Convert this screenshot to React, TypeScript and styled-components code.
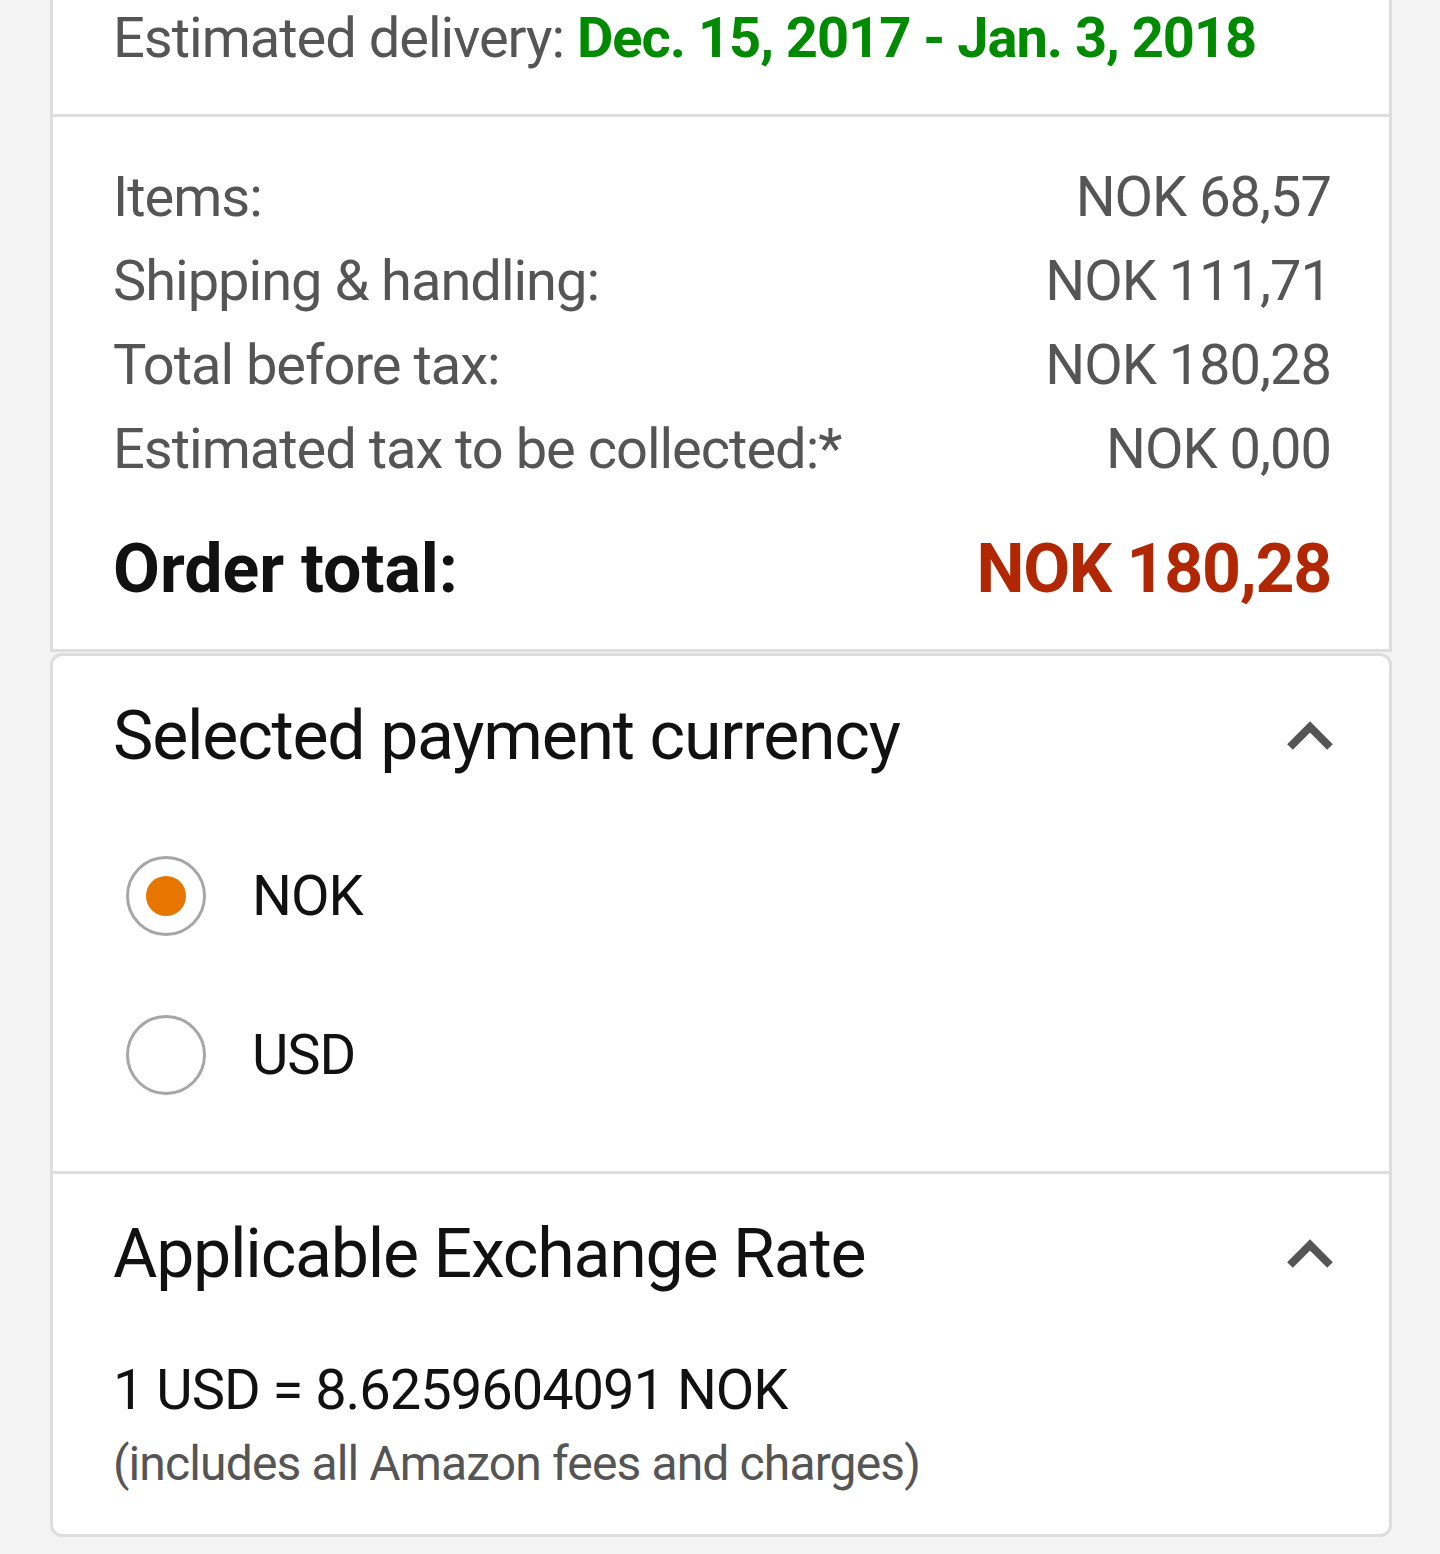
import React from "react";
import styled, { createGlobalStyle, css } from "styled-components";

const GlobalStyle = createGlobalStyle`
  html, body {
    margin: 0;
    padding: 0;
    background: #f3f3f3;
    font-family: Roboto, "Liberation Sans", sans-serif;
    color: #111;
  }
`;

// Roboto runs a little wider than the original font, so pull it in
const tight = css`
  letter-spacing: -0.018em;
`;

const summaryRows = [
  { label: "Items:", value: "NOK 68,57" },
  { label: "Shipping & handling:", value: "NOK 111,71" },
  { label: "Total before tax:", value: "NOK 180,28" },
  { label: "Estimated tax to be collected:*", value: "NOK 0,00" },
];

const currencies = ["NOK", "USD"];

function ChevronUp() {
  return (
    <svg width="50" height="34" viewBox="0 0 50 34">
      <path d="M5 28 L25 8 L45 28" fill="none" stroke="#555" strokeWidth="8" />
    </svg>
  );
}

function App() {
  const [currency, setCurrency] = React.useState("NOK");

  return (
    <Page>
      <GlobalStyle />
      <OrderCard>
        <DeliverySection>
          <DeliveryLine>
            Estimated delivery: <Green>Dec. 15, 2017 - Jan. 3, 2018</Green>
          </DeliveryLine>
        </DeliverySection>
        <SummarySection>
          {summaryRows.map((row) => (
            <Row key={row.label}>
              <span>{row.label}</span>
              <span>{row.value}</span>
            </Row>
          ))}
          <TotalRow>
            <span>Order total:</span>
            <TotalPrice>NOK 180,28</TotalPrice>
          </TotalRow>
        </SummarySection>
      </OrderCard>

      <PaymentCard>
        <CurrencySection>
          <SectionHeader>
            <Title>Selected payment currency</Title>
            <ChevronUp />
          </SectionHeader>
          <RadioList>
            {currencies.map((c) => (
              <RadioRow key={c} onClick={() => setCurrency(c)}>
                <Radio $checked={currency === c} />
                <RadioLabel>{c}</RadioLabel>
              </RadioRow>
            ))}
          </RadioList>
        </CurrencySection>
        <RateSection>
          <SectionHeader>
            <Title>Applicable Exchange Rate</Title>
            <ChevronUp />
          </SectionHeader>
          <Rate>1 USD = 8.6259604091 NOK</Rate>
          <Note>(includes all Amazon fees and charges)</Note>
        </RateSection>
      </PaymentCard>
    </Page>
  );
}

const Page = styled("div")`
  display: flex;
  flex-direction: column;
  padding: 0 48px 20px 50px;
`;

const OrderCard = styled("div")`
  background: #fff;
  border: 3px solid #ddd;
  border-top: none;
`;

const DeliverySection = styled("div")`
  height: 114px;
  padding: 0 58px 0 60px;
  box-sizing: border-box;
`;

const DeliveryLine = styled("div")`
  font-size: 56px;
  line-height: 76px;
  color: #555;
  white-space: nowrap;
  ${tight}
`;

const Green = styled("span")`
  color: #008a00;
  font-weight: 700;
`;

const SummarySection = styled("div")`
  border-top: 3px solid #ddd;
  padding: 38px 58px 38px 60px;
`;

const Row = styled("div")`
  display: flex;
  justify-content: space-between;
  font-size: 56px;
  line-height: 84px;
  color: #555;
  ${tight}
`;

const TotalRow = styled(Row)`
  margin-top: 36px;
  font-size: 68px;
  font-weight: 700;
  color: #111;
  letter-spacing: 0;
`;

const TotalPrice = styled("span")`
  color: #b12704;
  ${tight}
`;

const PaymentCard = styled("div")`
  background: #fff;
  border: 3px solid #ddd;
  border-radius: 12px;
  margin-top: 1px;
`;

const CurrencySection = styled("div")`
  padding: 0 58px 37px 60px;
`;

const RateSection = styled("div")`
  padding: 0 58px 34px 60px;
  border-top: 3px solid #ddd;
`;

const SectionHeader = styled("div")`
  display: flex;
  justify-content: space-between;
  align-items: center;
  height: 160px;

  svg {
    margin-right: -4px;
  }
`;

const Title = styled("div")`
  font-size: 68px;
  color: #111;
  ${tight}
`;

const RadioList = styled("div")`
  display: flex;
  flex-direction: column;
`;

const RadioRow = styled("div")`
  display: flex;
  align-items: center;
  gap: 46px;
  height: 159px;
  padding-left: 13px;
  cursor: pointer;
`;

const Radio = styled("div")<{ $checked: boolean }>`
  width: 74px;
  height: 74px;
  border-radius: 50%;
  border: 3px solid #a6a6a6;
  display: flex;
  align-items: center;
  justify-content: center;
  flex-shrink: 0;

  &::after {
    content: "";
    width: 40px;
    height: 40px;
    border-radius: 50%;
    background: ${(p) => (p.$checked ? "#e77600" : "transparent")};
  }
`;

const RadioLabel = styled("span")`
  font-size: 56px;
  color: #111;
  ${tight}
`;

const Rate = styled("div")`
  margin-top: 18px;
  font-size: 56px;
  line-height: 76px;
  color: #111;
  ${tight}
`;

const Note = styled("div")`
  font-size: 48px;
  line-height: 72px;
  color: #555;
  ${tight}
`;

export default App;
